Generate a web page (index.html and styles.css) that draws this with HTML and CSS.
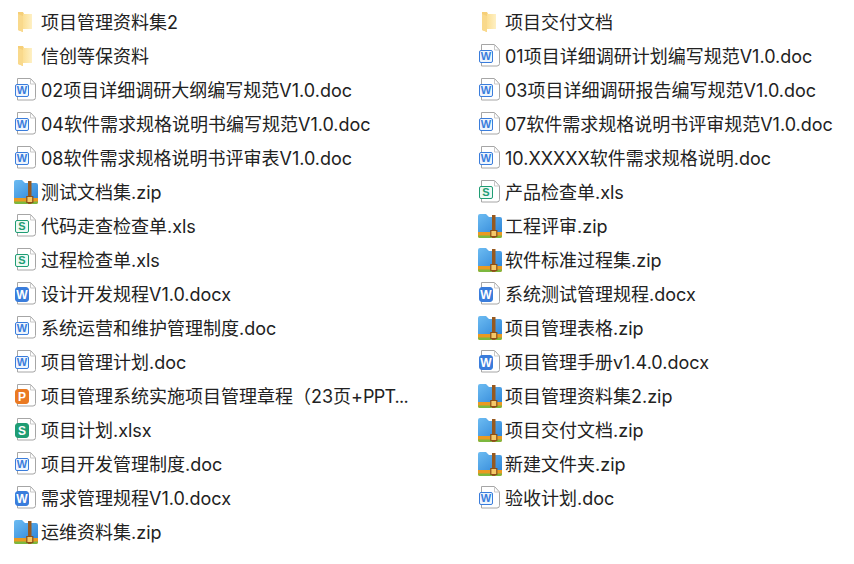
FILE: index.html
```html
<!DOCTYPE html>
<html lang="zh-CN">
<head>
  <meta charset="UTF-8" />
  <meta name="viewport" content="width=device-width, initial-scale=1.0" />
  <title>项目资料文件列表</title>
  <link rel="stylesheet" href="styles.css">
</head>
<body>
  <!-- shared file type icons -->
  <svg class="sprite" width="0" height="0" aria-hidden="true">
    <defs>
      <linearGradient id="folder-fill" x1="0" y1="0" x2="1" y2="0">
        <stop offset="0" stop-color="#fcdf94" />
        <stop offset="1" stop-color="#fef0c4" />
      </linearGradient>
      <linearGradient id="zip-fill" x1="0" y1="0" x2="1" y2="1">
        <stop offset="0" stop-color="#6dbcf2" />
        <stop offset="1" stop-color="#2f86d8" />
      </linearGradient>
    </defs>
    <symbol id="folder" viewBox="0 0 24 24">
      <path d="M4 2h5l1 2h4v15L9 19v3L4 20z" fill="#f6cf78" />
      <path d="M9 4h9v15H9z" fill="url(#folder-fill)" />
      <path d="M4 4l5 2v16l-5-2z" fill="#f9d98c" />
    </symbol>
    <symbol id="page" viewBox="0 0 24 24">
      <path d="M3.500 .5h13l5 5.500v13.500a2.500 2.500 0 0 1-2.500 2.500H3.500z" fill="#fff" stroke="#a6a6a6" />
      <path d="M16.500 .5v5.500h5" fill="none" stroke="#c8c8c8" />
    </symbol>
    <symbol id="zip" viewBox="0 0 24 24">
      <path d="M0 2a2 2 0 0 1 2-2h6l3 3h11a2 2 0 0 1 2 2v14H0z" fill="url(#zip-fill)" />
      <path d="M0 18h24v4a2 2 0 0 1-2 2H2a2 2 0 0 1-2-2z" fill="#e99a21" />
      <path d="M0 21.500h24v.5a2 2 0 0 1-2 2H2a2 2 0 0 1-2-2z" fill="#7cb83f" />
      <path d="M14 1h3.500v23H14z" fill="#96591f" />
      <path d="M12.800 16.500h6v6h-6z" fill="#f4c868" stroke="#8a4f18" stroke-width="1.200" />
    </symbol>
  </svg>

  <main class="file-grid">
    <div class="file"><svg class="icon"><use href="#folder" /></svg><span>项目管理资料集2</span></div>
    <div class="file"><svg class="icon"><use href="#folder" /></svg><span>项目交付文档</span></div>

    <div class="file"><svg class="icon"><use href="#folder" /></svg><span>信创等保资料</span></div>
    <div class="file"><div class="doc word"><svg class="icon"><use href="#page" /></svg><b>W</b></div><span>01项目详细调研计划编写规范V1.0.doc</span></div>

    <div class="file"><div class="doc word"><svg class="icon"><use href="#page" /></svg><b>W</b></div><span>02项目详细调研大纲编写规范V1.0.doc</span></div>
    <div class="file"><div class="doc word"><svg class="icon"><use href="#page" /></svg><b>W</b></div><span>03项目详细调研报告编写规范V1.0.doc</span></div>

    <div class="file"><div class="doc word"><svg class="icon"><use href="#page" /></svg><b>W</b></div><span>04软件需求规格说明书编写规范V1.0.doc</span></div>
    <div class="file"><div class="doc word"><svg class="icon"><use href="#page" /></svg><b>W</b></div><span>07软件需求规格说明书评审规范V1.0.doc</span></div>

    <div class="file"><div class="doc word"><svg class="icon"><use href="#page" /></svg><b>W</b></div><span>08软件需求规格说明书评审表V1.0.doc</span></div>
    <div class="file"><div class="doc word"><svg class="icon"><use href="#page" /></svg><b>W</b></div><span>10.XXXXX软件需求规格说明.doc</span></div>

    <div class="file"><svg class="icon"><use href="#zip" /></svg><span>测试文档集.zip</span></div>
    <div class="file"><div class="doc sheet"><svg class="icon"><use href="#page" /></svg><b>S</b></div><span>产品检查单.xls</span></div>

    <div class="file"><div class="doc sheet"><svg class="icon"><use href="#page" /></svg><b>S</b></div><span>代码走查检查单.xls</span></div>
    <div class="file"><svg class="icon"><use href="#zip" /></svg><span>工程评审.zip</span></div>

    <div class="file"><div class="doc sheet"><svg class="icon"><use href="#page" /></svg><b>S</b></div><span>过程检查单.xls</span></div>
    <div class="file"><svg class="icon"><use href="#zip" /></svg><span>软件标准过程集.zip</span></div>

    <div class="file"><div class="doc word solid"><svg class="icon"><use href="#page" /></svg><b>W</b></div><span>设计开发规程V1.0.docx</span></div>
    <div class="file"><div class="doc word solid"><svg class="icon"><use href="#page" /></svg><b>W</b></div><span>系统测试管理规程.docx</span></div>

    <div class="file"><div class="doc word"><svg class="icon"><use href="#page" /></svg><b>W</b></div><span>系统运营和维护管理制度.doc</span></div>
    <div class="file"><svg class="icon"><use href="#zip" /></svg><span>项目管理表格.zip</span></div>

    <div class="file"><div class="doc word"><svg class="icon"><use href="#page" /></svg><b>W</b></div><span>项目管理计划.doc</span></div>
    <div class="file"><div class="doc word solid"><svg class="icon"><use href="#page" /></svg><b>W</b></div><span>项目管理手册v1.4.0.docx</span></div>

    <div class="file"><div class="doc ppt solid"><svg class="icon"><use href="#page" /></svg><b>P</b></div><span>项目管理系统实施项目管理章程（23页+<i class="tail">PPT...</i></span></div>
    <div class="file"><svg class="icon"><use href="#zip" /></svg><span>项目管理资料集2.zip</span></div>

    <div class="file"><div class="doc sheet solid"><svg class="icon"><use href="#page" /></svg><b>S</b></div><span>项目计划.xlsx</span></div>
    <div class="file"><svg class="icon"><use href="#zip" /></svg><span>项目交付文档.zip</span></div>

    <div class="file"><div class="doc word"><svg class="icon"><use href="#page" /></svg><b>W</b></div><span>项目开发管理制度.doc</span></div>
    <div class="file"><svg class="icon"><use href="#zip" /></svg><span>新建文件夹.zip</span></div>

    <div class="file"><div class="doc word solid"><svg class="icon"><use href="#page" /></svg><b>W</b></div><span>需求管理规程V1.0.docx</span></div>
    <div class="file"><div class="doc word"><svg class="icon"><use href="#page" /></svg><b>W</b></div><span>验收计划.doc</span></div>

    <div class="file"><svg class="icon"><use href="#zip" /></svg><span>运维资料集.zip</span></div>
  </main>
</body>
</html>
```

FILE: styles.css
```css
body {
  margin: 0;
  background: #fff;
  color: #222;
  font-family: Inter, "Noto Sans CJK SC", sans-serif;
  font-size: 18px;
}
.sprite {
  display: block;
}
.file-grid {
  display: grid;
  grid-template-columns: 464px 1fr;
  grid-auto-rows: 34px;
  padding: 5px 0 0 14px;
}
.file {
  display: flex;
  align-items: center;
  gap: 3px;
  white-space: nowrap;
}
.file > span {
  padding-bottom: 2px;
}
.tail {
  font-style: normal;
  letter-spacing: -0.8px;
}
.icon {
  display: block;
  width: 24px;
  height: 24px;
  flex: none;
}
.doc {
  position: relative;
  flex: none;
  width: 24px;
  height: 24px;
  color: #3a7ddc;
}
/* letter badge sits over the left edge of the page */
.doc b {
  position: absolute;
  top: 6px;
  left: 1px;
  width: 14px;
  height: 13px;
  box-sizing: border-box;
  display: flex;
  align-items: center;
  justify-content: center;
  border: 1.5px solid currentColor;
  border-radius: 2px;
  background: #eef5fd;
  font: 700 11px/1 "Liberation Sans", sans-serif;
}
.sheet {
  color: #1f9d74;
}
.sheet b {
  background: #eefaf5;
}
.ppt {
  color: #ea7a22;
}
.solid b {
  top: 5px;
  height: 15px;
  border-radius: 3px;
  background: currentColor;
  font-size: 12px;
  -webkit-text-fill-color: #fff;
}
```
